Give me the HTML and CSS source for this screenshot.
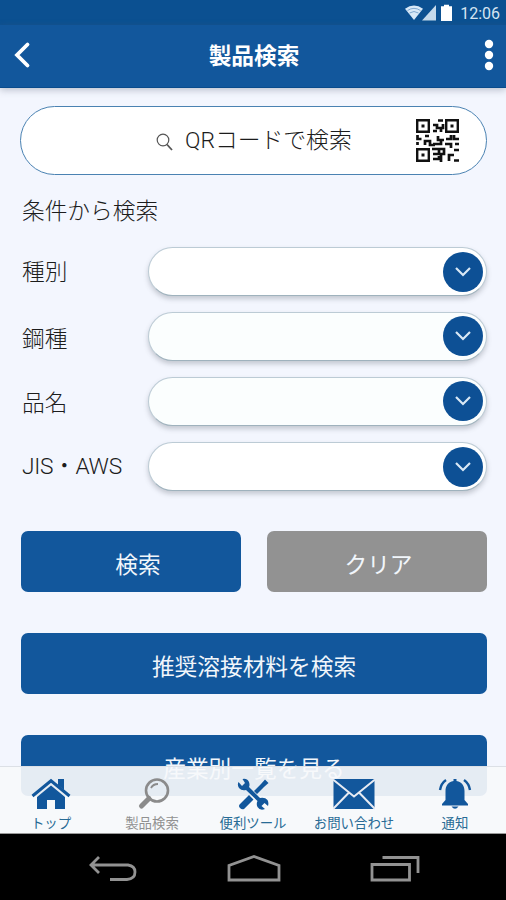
FILE: index.html
```html
<!DOCTYPE html>
<html lang="ja">
<head>
<meta charset="utf-8">
<title>製品検索</title>
<link rel="stylesheet" href="styles.css">
</head>
<body>
<div class="phone">
  <div class="status">
    <svg class="status-icons" width="50" height="18" viewBox="0 0 50 18">
      <path d="M1 4.8Q10 -1.6 19 4.8L10 16z" fill="#d7e8f7"/>
      <path d="M3.500 6.500Q10 2.200 16.500 6.500M5.500 9Q10 6 14.500 9" fill="none" stroke="#6a98c5" stroke-width=".8"/>
      <path d="M32 1V16.500H18z" fill="#c5d9eb"/>
      <path d="M40 0.700h5v1.600h3V17H37V2.300h3z" fill="#fff"/>
    </svg>
    <span class="clock">12:06</span>
  </div>
  <header class="appbar">
    <svg class="back" width="18" height="28" viewBox="0 0 18 28"><path d="M13.500 3.500L3 14L13.500 24.500" fill="none" stroke="#fff" stroke-width="3.800" stroke-linecap="round"/></svg>
    <h1 class="title">製品検索</h1>
    <svg class="more" width="10" height="32" viewBox="0 0 10 32" fill="#fff"><circle cx="5" cy="5" r="4.200"/><circle cx="5" cy="16" r="4.200"/><circle cx="5" cy="27" r="4.200"/></svg>
  </header>
  <main class="content">
    <div class="qr-button">
      <svg class="lens" width="18" height="18" viewBox="0 0 18 18" fill="none" stroke="#555"><circle cx="7" cy="7" r="5.800" stroke-width="1.200"/><path d="M11 11.500L16 17" stroke-width="1.800"/></svg>
      <span class="qr-label">QRコードで検索</span>
      <svg class="qr-code" width="44" height="44" viewBox="0 0 44 44" fill="#111">
        <path fill-rule="evenodd" d="M0 0h14v14H0zM2.400 2.400v9.200h9.200V2.400zM29 0h14v14H29zM31.400 2.400v9.200h9.200V2.400zM0 29h14v14H0zM2.400 31.400v9.200h9.200V31.400z"/>
        <path d="M5.500 5.500h3v3h-3zM34.500 5.500h3v3h-3zM5.500 34.500h3v3h-3z"/>
        <g fill="none" stroke="#111" stroke-width="2.700">
          <path d="M22 1.500h5M17 6h4v3h6V5M17 12h4M25 10v3"/>
          <path d="M1.500 16v4h4M1.500 23v3M9 17h4M9 26v-4h5v4h5M17 25h8v-4M22 17v4h6M30 20h5v-4M38 16v4h5"/>
          <path d="M29 25h6v4M39 25h4M16 30h7v5h-6M23 30h5v5h-5M17 40h6v-3M25 36v7M33 42v-6h5M38 31h5M38 41.500h5"/>
        </g>
      </svg>
    </div>
    <h2 class="section">条件から検索</h2>
    <div class="fields">
      <div class="field"><span class="label">種別</span><div class="select"><span class="drop"><svg width="18" height="12" viewBox="0 0 18 12"><path d="M2 2L9 9L16 2" /></svg></span></div></div>
      <div class="field tinted"><span class="label low">鋼種</span><div class="select"><span class="drop"><svg width="18" height="12" viewBox="0 0 18 12"><path d="M2 2L9 9L16 2" /></svg></span></div></div>
      <div class="field tinted"><span class="label name">品名</span><div class="select"><span class="drop"><svg width="18" height="12" viewBox="0 0 18 12"><path d="M2 2L9 9L16 2" /></svg></span></div></div>
      <div class="field"><span class="label latin">JIS・AWS</span><div class="select"><span class="drop"><svg width="18" height="12" viewBox="0 0 18 12"><path d="M2 2L9 9L16 2" /></svg></span></div></div>
    </div>
    <div class="actions">
      <div class="btn search">検索</div>
      <div class="btn clear">クリア</div>
    </div>
    <div class="btn wide">推奨溶接材料を検索</div>
    <div class="btn wide">産業別一覧を見る</div>
  </main>
  <nav class="tabs">
    <div class="tab">
      <svg width="40" height="32" viewBox="0 0 40 32" fill="#12579c"><path d="M27 1h6v11l-6-5z"/><path d="M20 7.500L34 19V31H24V22H16V31H6V19z"/><path d="M1.500 18L20 2.800L38.500 18" fill="none" stroke="#12579c" stroke-width="3"/></svg>
      <span>トップ</span>
    </div>
    <div class="tab current">
      <svg width="40" height="32" viewBox="0 0 40 32" fill="none" stroke="#8b8b8b"><circle cx="25" cy="12.500" r="11" stroke-width="2.600"/><path d="M17 20.500L9.500 28" stroke-width="5" stroke-linecap="round"/><path d="M19 10Q21 6 26 6" stroke-width="1.800"/></svg>
      <span>製品検索</span>
    </div>
    <div class="tab">
      <svg width="40" height="32" viewBox="0 0 40 32" fill="#12579c">
        <path d="M9.500 1Q14 0 16 4Q17 7 16 9L27 20Q32 19 34.500 22Q36 25 35 28L31.500 25L28.500 28L32 31Q27 33 24.500 29Q23 26 24.500 23L13 12Q8.500 13 6 10Q4 7 5.500 4L9 8L12 5z"/>
        <path d="M16 17L20.500 21.500L11 31Q9 32 7 30Q5 28 7 26zM21 13L28 6L32 1.500L35.500 5L31 9L24 16z"/>
      </svg>
      <span>便利ツール</span>
    </div>
    <div class="tab">
      <svg width="42" height="32" viewBox="0 0 42 32"><path d="M0.500 1h41v30h-41z" fill="#12579c"/><path d="M0 1.500L21 18.500L42 1.500M0 31L16 14.500M42 31L26 14.500" fill="none" stroke="#e7ebf3" stroke-width="2"/></svg>
      <span>お問い合わせ</span>
    </div>
    <div class="tab">
      <svg width="34" height="32" viewBox="0 0 34 32" fill="#12579c"><path d="M15.500 3V1h3v2C24 4 26.500 8 26.500 13V22L30 26V27.500H4V26L7.500 22V13C7.500 8 10 4 15.500 3zM13.500 28.500h7Q17 33 13.500 28.500z"/><path d="M8 2Q3 5.500 2 12M26 2Q31 5.500 32 12" fill="none" stroke="#12579c" stroke-width="2.400"/></svg>
      <span>通知</span>
    </div>
  </nav>
  <div class="sysbar">
    <svg width="50" height="28" viewBox="0 0 50 28"><path d="M11 2L3 10L11 18M3 10H40Q47 11 47 17Q47 24 39 24.500H22"/></svg>
    <svg width="54" height="28" viewBox="0 0 54 28"><path d="M2 25V10.500L27 1.500L52 10.500V25z"/></svg>
    <svg width="50" height="28" viewBox="0 0 50 28"><path d="M2 9.500H39.500V25H2zM12.500 2.500H48V18"/></svg>
  </div>
</div>
</body>
</html>
```
FILE: styles.css
```css
* { box-sizing: border-box; }
body { margin: 0; }
svg { display: block; flex: none; }
.phone {
  position: relative;
  width: 506px;
  height: 900px;
  overflow: hidden;
  display: flex;
  flex-direction: column;
  background: #f3f6fe;
  font-family: "Noto Sans CJK JP", sans-serif;
  font-weight: 300;
  color: #1c1c1c;
}
.status {
  height: 25px;
  flex: none;
  display: flex;
  justify-content: flex-end;
  align-items: center;
  gap: 6px;
  padding: 0 6px 0 0;
  background: #0b5091;
}
.clock { font: 400 16px/25px Roboto, sans-serif; color: #d5e4f2; padding-top: 2px; }
.appbar {
  height: 63px;
  flex: none;
  display: flex;
  align-items: center;
  justify-content: space-between;
  padding: 0 12px 3px 14px;
  background: #12579c;
  border-bottom: 1px solid #094b8c;
  box-shadow: 0 2px 7px rgba(80, 90, 110, .35);
}
.title { margin: 0 8px 0 0; font-size: 22.7px; line-height: 30px; font-weight: 700; color: #fff; }
.content {
  height: 746px;
  flex: none;
  padding: 18px 19px 0 21px;
}
.qr-button {
  height: 69px;
  margin-left: -1px;
  display: flex;
  align-items: center;
  padding: 0 26px 0 135px;
  border: 1.500px solid #4a82b2;
  border-radius: 35px;
  background: #fff;
}
.lens { margin-top: 3px; }
.qr-label { font-family: Roboto, "Noto Sans CJK JP", sans-serif; font-size: 22.8px; line-height: 32px; margin: 1px 0 0 11px; }
.qr-code { margin-left: auto; }
.section { margin: 19px 0 0 1px; font-size: 22.7px; line-height: 32px; font-weight: 300; }
.fields { display: flex; flex-direction: column; gap: 16px; margin-top: 21px; }
.field { height: 49px; display: flex; align-items: center; }
.label { width: 127px; padding: 0 0 2px 1px; font-size: 22.7px; line-height: 32px; }
.low { padding-top: 4px; }
.name { padding-bottom: 0; }
.latin { font-family: Roboto, "Noto Sans CJK JP", sans-serif; padding-bottom: 0; letter-spacing: -.3px; }
.select {
  flex: 1;
  height: 49px;
  display: flex;
  align-items: center;
  justify-content: flex-end;
  padding: 0 3px 0 0;
  border: 1px solid #bccbd5;
  border-bottom-color: #9fb2bd;
  border-radius: 25px;
  background: #fff;
  box-shadow: 0 3px 5px rgba(60, 70, 80, .26);
}
.tinted .select { background: #fbfefe; padding-bottom: 1px; }
.drop {
  width: 40px;
  height: 40px;
  display: grid;
  place-items: center;
  border-radius: 50%;
  background: #0d5095;
}
.drop path { fill: none; stroke: #d9e8f5; stroke-width: 2.200; }
.actions { display: grid; grid-template-columns: 1fr 1fr; gap: 26px; margin-top: 40px; }
.btn {
  height: 61px;
  display: flex;
  align-items: center;
  justify-content: center;
  padding-top: 3px;
  border-radius: 7px;
  background: #12579c;
  color: #f1f6fb;
  font-size: 22.7px;
  font-weight: 400;
}
.search { padding-left: 14px; }
.clear { background: #929292; padding-left: 3px; }
.wide { margin-top: 41px; }
.tabs {
  position: absolute;
  left: 0;
  right: 0;
  top: 766px;
  height: 68px;
  display: grid;
  grid-template-columns: repeat(5, 101px);
  border-top: 1px solid #dce0e6;
  border-bottom: 1px solid #999;
  background: rgba(247, 248, 251, .92);
}
.tab {
  display: flex;
  flex-direction: column;
  align-items: center;
  padding: 11px 0 0 1px;
  font-size: 13.4px;
  line-height: 18px;
  font-weight: 400;
  color: #286b95;
  white-space: nowrap;
}
.tab span { margin-top: 3px; }
.current { color: #919191; }
.sysbar {
  height: 66px;
  margin-top: auto;
  flex: none;
  display: flex;
  justify-content: center;
  align-items: center;
  gap: 89px;
  padding: 4px 0 0 2px;
  background: #000;
}
.sysbar path { fill: none; stroke: #929292; stroke-width: 2.800; }
```
